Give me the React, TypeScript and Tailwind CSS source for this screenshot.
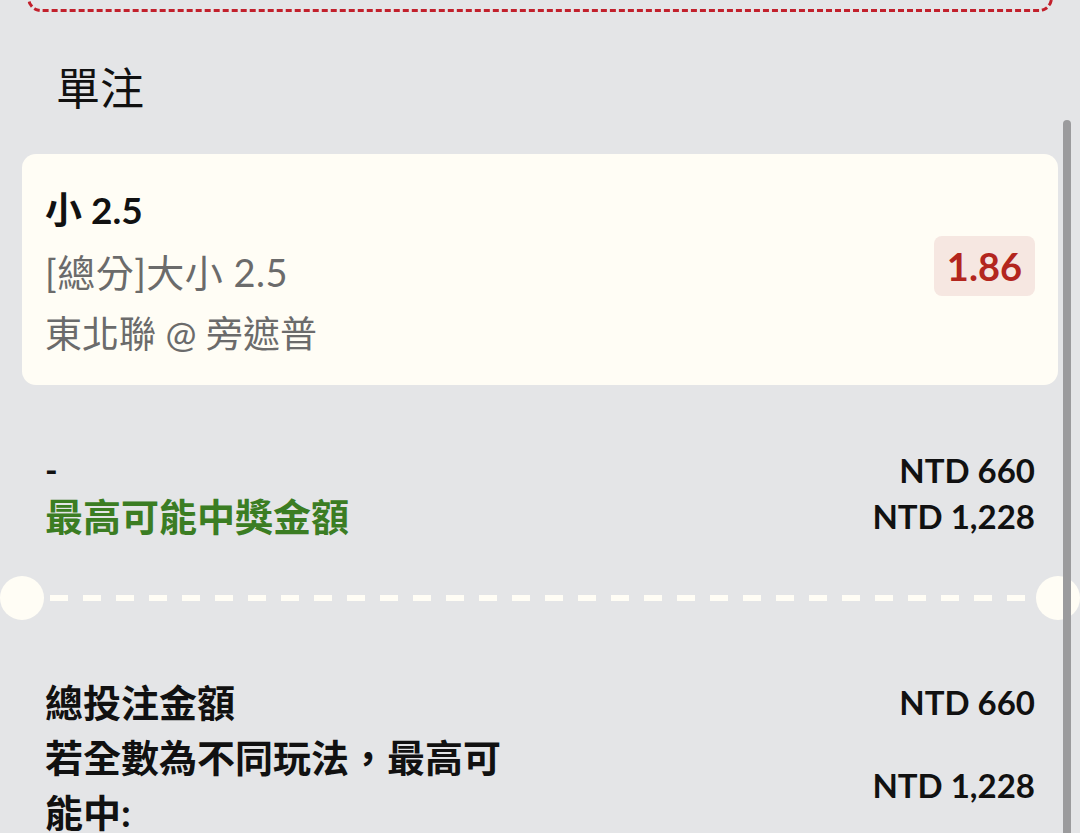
const font = "font-['Lato','Noto_Sans_CJK_TC',sans-serif]";

function Divider() {
  return (
    <div className="relative flex h-[44px] items-center">
      <div className="h-[44px] w-[44px] shrink-0 rounded-full bg-[#fffdf5]" />
      <div className="mx-[6px] h-[6px] flex-1 bg-[repeating-linear-gradient(90deg,#fffdf5_0_18px,transparent_18px_33px)]" />
      <div className="h-[44px] w-[44px] shrink-0 rounded-full bg-[#fffdf5]" />
    </div>
  );
}

export default function App() {
  return (
    <div className={`${font} relative h-[833px] w-[1080px] overflow-hidden bg-[#e4e5e7] text-[#111]`}>
      {/* tail of the previous box */}
      <div className="mx-[27px] -mt-10 h-[52px] rounded-[14px] border-[3px] border-dashed border-[#c2202c]" />

      <h2 className="mt-[46px] px-[56px] text-[44px] font-normal leading-[60px]">單注</h2>

      {/* Selection */}
      <div className="mx-[22px] mt-[36px] flex items-center justify-between rounded-[14px] bg-[#fffdf5] pb-[20px] pl-[23px] pr-[23px] pt-[25px]">
        <div className="text-[37px] leading-[62px]">
          <div className="font-bold">小 2.5</div>
          <div className="text-[38px] tracking-[0.5px] text-[#6b6b6b]">[總分]大小 2.5</div>
          <div className="text-[#6b6b6b]">東北聯 @ 旁遮普</div>
        </div>
        <div className="-mt-[12px] rounded-[8px] bg-[#f6e7e1] px-[13px] text-[38px] font-bold leading-[60px] text-[#b3261e]">
          1.86
        </div>
      </div>

      {/* Odds summary */}
      <div className="mt-[62px] flex justify-between px-[45px] leading-[46px]">
        <div>
          <div className="text-[34px] font-bold">-</div>
          <div className="text-[38px] font-bold text-[#3b7d23]">最高可能中獎金額</div>
        </div>
        <div className="text-right text-[33px] font-bold">
          <div>NTD 660</div>
          <div>NTD 1,228</div>
        </div>
      </div>

      <div className="mt-[37px]">
        <Divider />
      </div>

      {/* Totals */}
      <div className="mt-[55px] px-[45px] text-[38px] font-bold leading-[55px]">
        <div className="flex justify-between">
          <div>總投注金額</div>
          <div className="text-[33px]">NTD 660</div>
        </div>
        <div className="flex items-center justify-between">
          <div className="w-[470px]">若全數為不同玩法，最高可能中:</div>
          <div className="text-[33px]">NTD 1,228</div>
        </div>
      </div>

      {/* scrollbar */}
      <div className="absolute bottom-0 left-[1063px] top-[120px] w-[8px] rounded-t-full bg-[#9b9b9d]" />
    </div>
  );
}
